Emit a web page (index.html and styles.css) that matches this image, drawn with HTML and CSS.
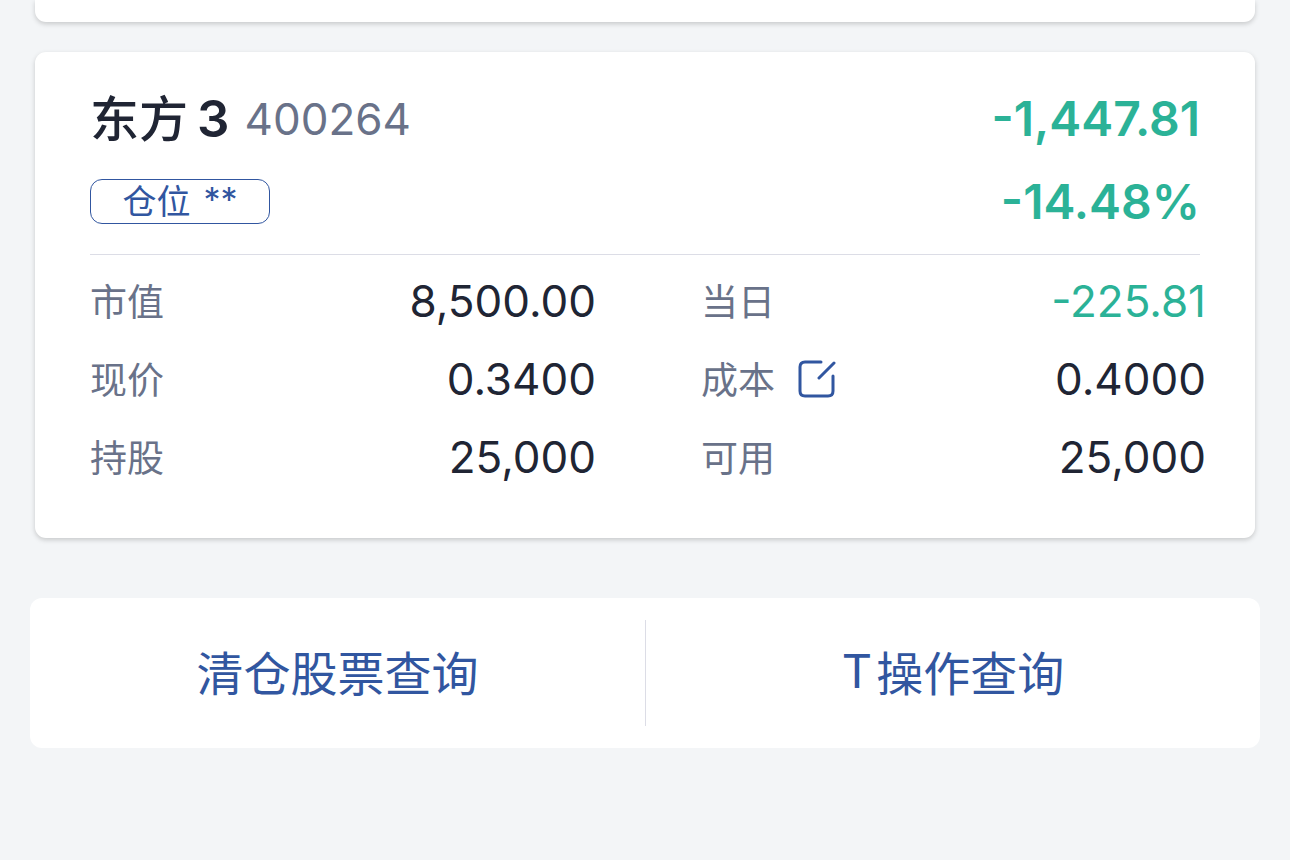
FILE: index.html
```html
<!DOCTYPE html>
<html lang="zh-CN">
<head>
<meta charset="utf-8">
<meta name="viewport" content="width=device-width, initial-scale=1">
<title>持仓</title>
<link rel="stylesheet" href="styles.css">
</head>
<body>
<main class="page">
  <section class="card card-previous" aria-hidden="true"></section>
  <section class="card holding">
    <header class="summary">
      <h2 class="stock"><span class="stock-name">东方</span><span class="stock-digit">3</span><span class="stock-code">400264</span></h2>
      <strong class="profit">-1,447.81</strong>
      <span class="position"><span>仓位</span><span class="stars">**</span></span>
      <strong class="profit">-14.48%</strong>
    </header>
    <dl class="metrics">
      <div class="metric"><dt>市值</dt><dd>8,500.00</dd></div>
      <div class="metric"><dt>当日</dt><dd class="loss">-225.81</dd></div>
      <div class="metric"><dt>现价</dt><dd>0.3400</dd></div>
      <div class="metric"><dt>成本<button class="edit" type="button" aria-label="修改成本"><svg class="edit-icon" viewBox="0 0 38 38"><path d="M23 2H7Q2 2 2 7V31Q2 36 7 36H30Q35 36 35 31V16M21 18L36 3" stroke-linecap="round"/></svg></button></dt><dd>0.4000</dd></div>
      <div class="metric"><dt>持股</dt><dd>25,000</dd></div>
      <div class="metric"><dt>可用</dt><dd>25,000</dd></div>
    </dl>
  </section>
  <nav class="queries">
    <a class="query" href="#cleared">清仓股票查询</a>
    <a class="query" href="#trades">T<span class="query-rest">操作查询</span></a>
  </nav>
</main>
</body>
</html>
```
FILE: styles.css
```css
* { box-sizing: border-box; }
body { margin: 0; background: #f3f5f7; color: #202534; font-family: Inter, "Noto Sans CJK SC", sans-serif; }
.page { padding: 0 30px 112px; }
.card { margin: 0 5px; background: #fff; border-radius: 11px; box-shadow: 0 2px 5px rgb(0 0 0 / 18%); }
.card-previous { height: 22px; border-radius: 0 0 11px 11px; }
.holding { margin-top: 30px; padding: 25px 55px 42px; }
.summary { display: grid; grid-template-columns: 1fr auto; align-items: center; grid-auto-rows: 83px; border-bottom: 1px solid #dcdde6; padding-bottom: 11px; }
.stock { display: flex; align-items: center; margin: 0; font-size: 51px; line-height: 60px; font-weight: 600; }
.stock-name { padding-top: 2px; font-size: 49px; font-weight: 500; }
.stock-digit { margin-left: 9px; }
.stock-code { margin-left: 15px; color: #697289; font-size: 44px; font-weight: 400; }
.profit { color: #2bb297; font-size: 48px; line-height: 60px; font-weight: 600; text-align: right; }
.position { display: flex; justify-content: center; align-items: center; gap: 13px; width: 180px; height: 45px; padding-bottom: 4px; border: 1px solid #3156a0; border-radius: 12px; color: #3156a0; font-size: 34px; }
.metrics { display: grid; grid-template-columns: 506px 1fr; column-gap: 105px; margin: 7px -6px 0 0; }
.metric { display: flex; align-items: center; justify-content: space-between; height: 78px; }
.metric dt { display: flex; align-items: center; padding-bottom: 3px; color: #697289; font-size: 37px; }
.metric dd { margin: 0; font-size: 44px; }
.metric .loss { color: #2bb297; }
.edit { display: flex; margin: 2px 0 0 23px; padding: 0; border: 0; background: none; }
.edit-icon { width: 38px; height: 38px; fill: none; stroke: #3156a0; stroke-width: 3; }
.queries { display: grid; grid-template-columns: 1fr 1fr; margin-top: 60px; padding: 22px 0; background: #fff; border-radius: 12px; }
.query { display: flex; justify-content: center; align-items: center; height: 106px; padding-bottom: 6px; color: #3156a0; font-size: 47px; text-decoration: none; }
.query + .query { border-left: 1px solid #dcdde6; }
.query-rest { margin-left: 4px; }
```
